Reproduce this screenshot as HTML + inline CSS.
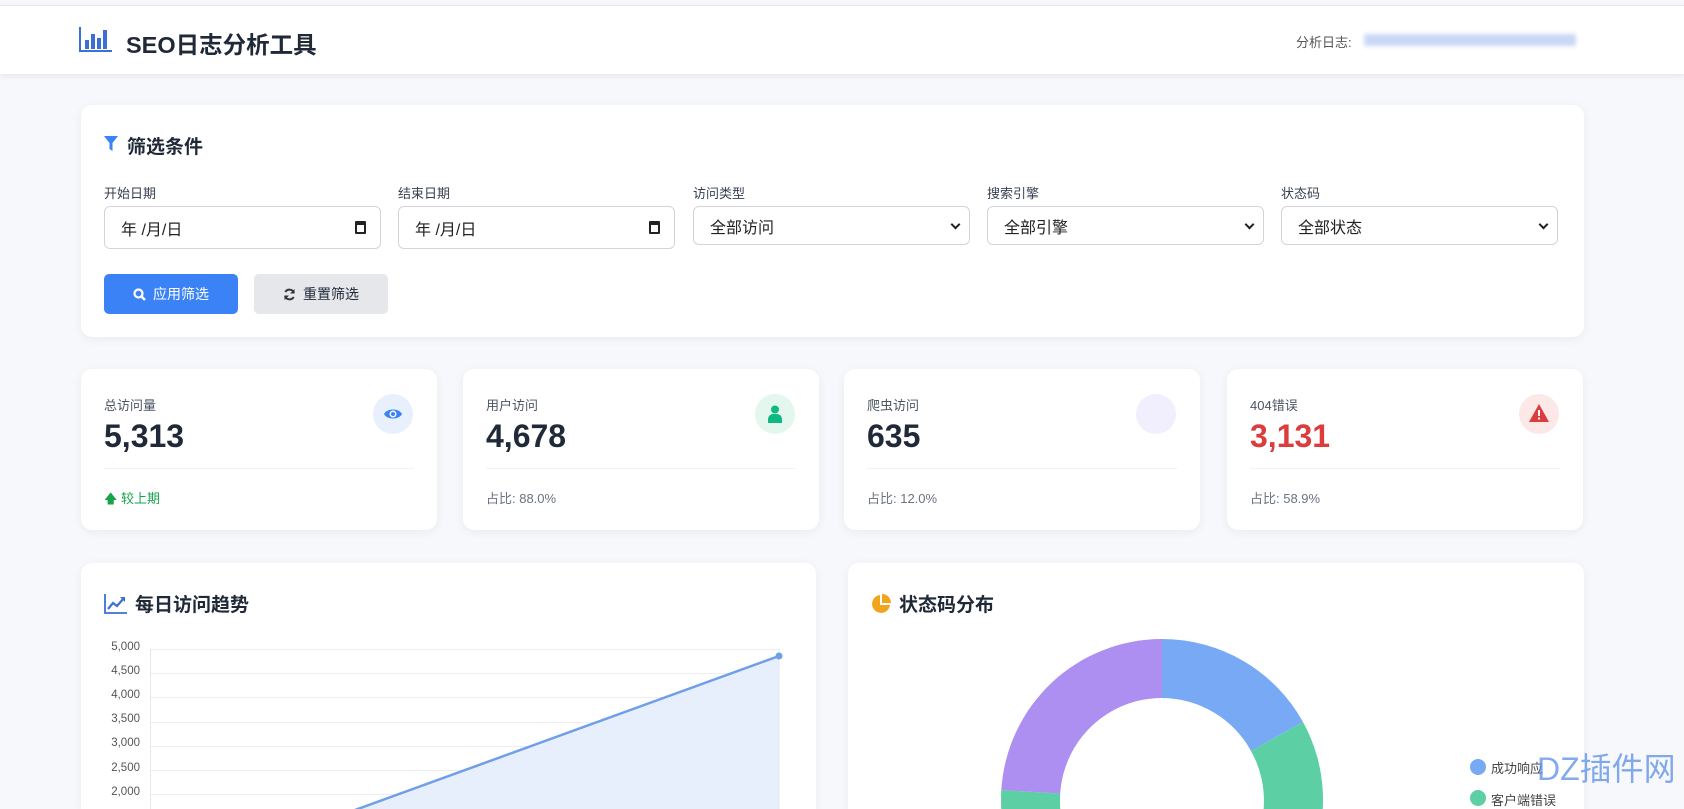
<!DOCTYPE html>
<html><head><meta charset="utf-8"><style>
*{box-sizing:border-box;margin:0;padding:0}
html,body{width:1684px;height:809px;overflow:hidden}
body{background:#f6f8fb;font-family:"Liberation Sans","Noto Sans CJK SC",sans-serif;color:#1f2937;position:relative}
.abs{position:absolute}
.card{position:absolute;background:#fff;border-radius:11px;box-shadow:0 2px 10px rgba(0,0,0,.06)}
.lbl{position:absolute;font-size:13px;color:#374151}
.inp{position:absolute;border:1px solid #d1d5db;border-radius:6px;background:#fff;font-size:16px;color:#222;padding-left:16px;display:flex;align-items:center}
.chev{position:absolute;right:10px;top:50%;margin-top:-5px;width:7px;height:7px;border-right:2px solid #222;border-bottom:2px solid #222;transform:rotate(45deg)}
.cal{position:absolute;right:14px;top:50%;margin-top:-7px;width:11px;height:13px;border:2px solid #222;border-top-width:4px;border-radius:1px}
.sl{position:absolute;left:23px;top:26px;font-size:13px;color:#4b5563}
.sn{position:absolute;left:23px;top:49px;font-size:32px;font-weight:bold;color:#1f2937}
.sd{position:absolute;left:23px;right:23px;top:99px;border-top:1px solid #f0f2f5}
.sf{position:absolute;left:23px;top:119px;font-size:13px;color:#6b7280}
.ic{position:absolute;right:24px;top:25px;width:40px;height:40px;border-radius:50%}
.ct{position:absolute;left:23px;top:27px;font-size:19px;font-weight:bold;display:flex;align-items:center;gap:8px}
.yl{position:absolute;width:40px;text-align:right;font-size:11.5px;color:#555}
.gl{position:absolute;left:150px;width:629px;border-top:1px solid #eceef2}
</style></head><body>
<div class="abs" style="left:0;top:5px;width:1684px;height:69px;background:#fff;border-top:1px solid #e5e7eb;box-shadow:0 2px 6px rgba(0,0,0,.08)"></div>
<svg class="abs" style="left:79px;top:27px" width="34" height="25" viewBox="0 0 34 25"><path d="M1 0v24h32" stroke="#3b6fd6" stroke-width="2" fill="none"/><rect x="6" y="13" width="4" height="9" fill="#3b6fd6"/><rect x="12" y="7" width="4" height="15" fill="#3b6fd6"/><rect x="18" y="11" width="4" height="11" fill="#3b6fd6"/><rect x="24" y="3" width="4" height="19" fill="#3b6fd6"/></svg>
<div class="abs" style="left:126px;top:26px;font-size:23.5px;font-weight:bold;color:#1f2937">SEO日志分析工具</div>
<div class="abs" style="left:1296px;top:32px;font-size:13px;color:#555">分析日志:</div>
<div class="abs" style="left:1364px;top:34px;width:212px;height:12px;background:#c9d8f6;filter:blur(2px)"></div>

<div class="card" style="left:81px;top:105px;width:1503px;height:232px">
 <svg class="abs" style="left:23px;top:31px" width="14" height="15" viewBox="0 0 14 15"><path d="M0 0h14L8.5 7v8L5.5 13V7z" fill="#3b82f6"/></svg>
 <div class="abs" style="left:46px;top:27px;font-size:19px;font-weight:bold">筛选条件</div>
</div>
<div class="lbl" style="left:104px;top:183px">开始日期</div>
<div class="lbl" style="left:398px;top:183px">结束日期</div>
<div class="lbl" style="left:693px;top:183px">访问类型</div>
<div class="lbl" style="left:987px;top:183px">搜索引擎</div>
<div class="lbl" style="left:1281px;top:183px">状态码</div>
<div class="inp" style="left:104px;top:206px;width:277px;height:43px">年 /月/日<span class="cal"></span></div>
<div class="inp" style="left:398px;top:206px;width:277px;height:43px">年 /月/日<span class="cal"></span></div>
<div class="inp" style="left:693px;top:206px;width:277px;height:39px">全部访问<span class="chev"></span></div>
<div class="inp" style="left:987px;top:206px;width:277px;height:39px">全部引擎<span class="chev"></span></div>
<div class="inp" style="left:1281px;top:206px;width:277px;height:39px">全部状态<span class="chev"></span></div>
<div class="abs" style="left:104px;top:274px;width:134px;height:40px;background:#3b82f6;border-radius:5px;color:#fff;font-size:14px;display:flex;align-items:center;justify-content:center;gap:7px"><svg width="13" height="13" viewBox="0 0 13 13"><circle cx="5.5" cy="5.5" r="4" stroke="#fff" stroke-width="2.2" fill="none"/><path d="M8.5 8.5l3.5 3.5" stroke="#fff" stroke-width="2.4"/></svg>应用筛选</div>
<div class="abs" style="left:254px;top:274px;width:134px;height:40px;background:#e5e7eb;border-radius:5px;color:#1f2937;font-size:14px;display:flex;align-items:center;justify-content:center;gap:7px"><svg width="13" height="13" viewBox="0 0 13 13"><path d="M11 5A4.8 4.8 0 0 0 2.3 4M2 8a4.8 4.8 0 0 0 8.7 1" stroke="#333" stroke-width="2" fill="none"/><path d="M11.5 1v4.5H7zM1.5 12V7.5H6z" fill="#333"/></svg>重置筛选</div>

<div class="card" style="left:81px;top:369px;width:356px;height:161px">
 <div class="sl">总访问量</div><div class="sn">5,313</div><div class="sd"></div>
 <div class="sf" style="color:#16a34a">🡅 较上期</div>
 <div class="ic" style="background:#e8f0fe"><svg style="position:absolute;left:10px;top:12px" width="20" height="16" viewBox="0 0 20 16"><path d="M1 8C4 2 16 2 19 8C16 14 4 14 1 8z" fill="#3b82f6"/><circle cx="10" cy="8" r="3.5" fill="#fff"/><circle cx="10" cy="8" r="2" fill="#3b82f6"/></svg></div>
</div>
<div class="card" style="left:463px;top:369px;width:356px;height:161px">
 <div class="sl">用户访问</div><div class="sn">4,678</div><div class="sd"></div><div class="sf">占比: 88.0%</div>
 <div class="ic" style="background:#e3f7ee"><svg style="position:absolute;left:13px;top:11px" width="14" height="18" viewBox="0 0 14 18"><circle cx="7" cy="4.5" r="4" fill="#10b981"/><path d="M0 18v-4a5 5 0 0 1 5-5h4a5 5 0 0 1 5 5v4z" fill="#10b981"/></svg></div>
</div>
<div class="card" style="left:844px;top:369px;width:356px;height:161px">
 <div class="sl">爬虫访问</div><div class="sn">635</div><div class="sd"></div><div class="sf">占比: 12.0%</div>
 <div class="ic" style="background:#f1eefe"></div>
</div>
<div class="card" style="left:1227px;top:369px;width:356px;height:161px">
 <div class="sl">404错误</div><div class="sn" style="color:#dc3c3c">3,131</div><div class="sd"></div><div class="sf">占比: 58.9%</div>
 <div class="ic" style="background:#fde8e8"><svg style="position:absolute;left:10px;top:10px" width="20" height="18" viewBox="0 0 20 18"><path d="M10 0L20 18H0z" fill="#dc3c3c"/><rect x="9" y="6" width="2" height="6" fill="#fff"/><rect x="9" y="13.5" width="2" height="2" fill="#fff"/></svg></div>
</div>

<div class="card" style="left:81px;top:563px;width:735px;height:246px;border-radius:11px 11px 0 0">
 <div class="ct"><svg width="23" height="20" viewBox="0 0 23 20"><path d="M1 0v19h22" stroke="#3b6fd6" stroke-width="1.8" fill="none"/><path d="M4 15l5-6 4 3 7-8" stroke="#3b6fd6" stroke-width="2.2" fill="none"/><path d="M16 3h5v5z" fill="#3b6fd6"/></svg>每日访问趋势</div>
</div>
<div class="yl" style="left:100px;top:641px">5,000</div>
<div class="yl" style="left:100px;top:665px">4,500</div>
<div class="yl" style="left:100px;top:689px">4,000</div>
<div class="yl" style="left:100px;top:713px">3,500</div>
<div class="yl" style="left:100px;top:737px">3,000</div>
<div class="yl" style="left:100px;top:762px">2,500</div>
<div class="yl" style="left:100px;top:786px">2,000</div>
<div class="gl" style="top:649px"></div><div class="gl" style="top:673px"></div><div class="gl" style="top:697px"></div><div class="gl" style="top:722px"></div><div class="gl" style="top:746px"></div><div class="gl" style="top:770px"></div><div class="gl" style="top:794px"></div>
<div class="abs" style="left:150px;top:649px;height:160px;border-left:1px solid #e5e7eb"></div>
<svg class="abs" style="left:0;top:0" width="1684" height="809"><path d="M300 830L779 656V830z" fill="#e8effc"/><path d="M300 830L779 656" stroke="#6f9fe8" stroke-width="2.5"/><path d="M779 649V830" stroke="#e5e7eb"/><circle cx="779" cy="656" r="3.5" fill="#6f9fe8"/></svg>

<div class="card" style="left:848px;top:563px;width:736px;height:246px;border-radius:11px 11px 0 0">
 <div class="ct"><svg width="20" height="20" viewBox="0 0 20 20"><path d="M9 1A9 9 0 1 0 19 11H9z" fill="#f2a41c"/><path d="M11 0A9 9 0 0 1 20 9H11z" fill="#f2a41c"/></svg>状态码分布</div>
</div>
<svg class="abs" style="left:0;top:0" width="1684" height="809">
 <path d="M1162 639A161 161 0 0 1 1303 722L1251 751A102 102 0 0 0 1162 698z" fill="#78a9f5"/>
 <path d="M1303 722A161 161 0 1 1 1001.3 790L1060.2 793.6A102 102 0 1 0 1251 751z" fill="#5ccfa5"/>
 <path d="M1001.3 790A161 161 0 0 1 1162 639L1162 698A102 102 0 0 0 1060.2 793.6z" fill="#ad8ff2"/>
 <circle cx="1478" cy="767" r="8" fill="#78a9f5"/><circle cx="1478" cy="798" r="8" fill="#5ccfa5"/>
</svg>
<div class="abs" style="left:1491px;top:758px;font-size:13px;color:#444">成功响应</div>
<div class="abs" style="left:1491px;top:790px;font-size:13px;color:#444">客户端错误</div>
<div class="abs" style="left:1537px;top:744px;font-size:32px;color:#5b8ee8;opacity:.75">DZ插件网</div>
</body></html>
